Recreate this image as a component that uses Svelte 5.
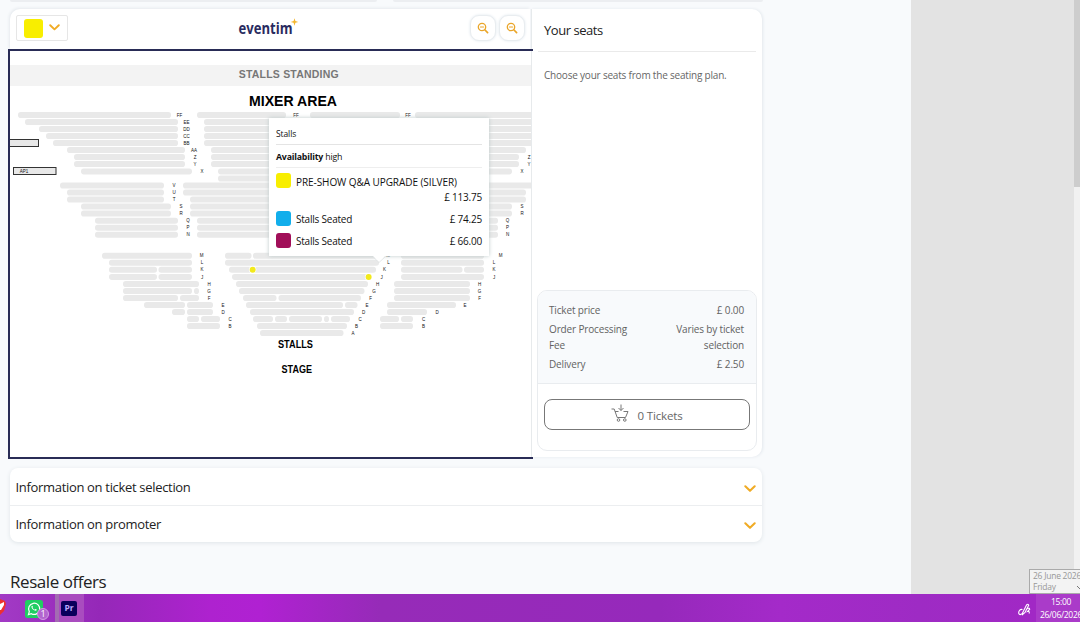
<script>
  const rows = [
    [115, [[18, 171], [197, 286], [310, 400], [415, 540]], [['FF', 179.5], ['FF', 296], ['FF', 408]]],
    [122, [[25, 178], [204, 540]], [['EE', 186.5]]],
    [129, [[39, 178], [204, 540]], [['DD', 186.5]]],
    [136, [[46, 178], [204, 540]], [['CC', 186.5]]],
    [143, [[53, 178], [204, 540]], [['BB', 186.5]]],
    [150, [[67, 185], [211, 526]], [['AA', 194]]],
    [157, [[74, 185], [211, 519]], [['Z', 195], ['Z', 529]]],
    [164, [[74, 185], [211, 519]], [['Y', 195], ['Y', 529]]],
    [171.4, [[81, 192], [218, 512]], [['X', 202], ['X', 522]]],
    [178.5, [[218, 400]], []],
    [185.5, [[60, 164], [183, 540]], [['V', 174]]],
    [192.5, [[67, 164], [183, 526]], [['U', 174]]],
    [199.5, [[67, 164], [190, 526]], [['T', 174]]],
    [206.5, [[81, 171], [190, 512]], [['S', 181], ['S', 522]]],
    [213.5, [[81, 171], [190, 512]], [['R', 181], ['R', 522]]],
    [220.8, [[95, 178], [197, 498]], [['Q', 188], ['Q', 507.5]]],
    [227.8, [[95, 178], [197, 498]], [['P', 188], ['P', 507.5]]],
    [234.8, [[95, 178], [197, 498]], [['N', 188], ['N', 507.5]]],
    [255.8, [[102, 192], [225, 251.5], [253, 383], [401, 484]], [['M', 201.5], ['M', 388], ['M', 500.5]]],
    [262.8, [[109, 192], [225, 379], [401, 484]], [['L', 202], ['L', 388.5], ['L', 494]]],
    [269.8, [[109, 157], [158.5, 192], [229, 376], [401, 462.5], [464, 484]], [['K', 202], ['K', 384.5], ['K', 494]]],
    [276.9, [[109, 157], [158.5, 192], [232, 372], [401, 484]], [['J', 202], ['J', 381.5], ['J', 494]]],
    [284, [[123, 199], [236, 368], [394, 470]], [['H', 209], ['H', 377.5], ['H', 479.5]]],
    [291, [[123, 192], [194, 199], [239, 364.5], [394, 470]], [['G', 209], ['G', 374], ['G', 479.5]]],
    [298, [[123, 178], [180, 199], [243, 276.5], [278.5, 361], [394, 470]], [['F', 209], ['F', 370.5], ['F', 479.5]]],
    [305, [[144, 185], [187, 213], [246, 343], [345, 357.5], [387, 456]], [['E', 223], ['E', 367], ['E', 465]]],
    [312, [[172, 185], [187, 213], [250, 354], [387, 427]], [['D', 223], ['D', 363.5], ['D', 437]]],
    [319, [[187, 199], [201, 220], [253, 273], [275, 287], [289, 322], [324, 329], [331, 350], [380, 399], [401, 413]], [['C', 230], ['C', 360], ['C', 423.5]]],
    [326, [[187, 220], [257, 347], [380, 413]], [['B', 230], ['B', 356.5], ['B', 423.5]]],
    [333, [[260, 343.5]], [['A', 353]]]
  ];
  const categories = [
    { name: 'PRE-SHOW Q&A UPGRADE (SILVER)', price: '£ 113.75', color: '#f8ee00', wide: true },
    { name: 'Stalls Seated', price: '£ 74.25', color: '#12aeeb' },
    { name: 'Stalls Seated', price: '£ 66.00', color: '#a10f59' }
  ];
  const panels = ['Information on ticket selection', 'Information on promoter'];
</script>

{#snippet chevron(w)}
  <svg class="chev" width={w} height={w * 0.64} viewBox="0 0 11 7"><path d="M1.2 1.2 5.5 5.3 9.8 1.2" fill="none" stroke="#f0ab25" stroke-width="1.9" stroke-linecap="round" stroke-linejoin="round" /></svg>
{/snippet}

{#snippet zoomIcon()}
  <svg width="12" height="12" viewBox="0 0 12 12" fill="none" stroke="#eaa62a" stroke-linecap="round"><circle cx="5" cy="5" r="3.7" stroke-width="1.300" /><path d="M3.4 5h3.2" stroke-width="1.200" /><path d="M8 8l2.600 2.600" stroke-width="1.700" /></svg>
{/snippet}

<div class="screen">
  <div class="browser">
    <main>
      <div class="tops"><i></i><i></i></div>
      <section class="booking">
        <div class="plan">
          <header>
            <button class="picker" aria-label="Category"><span></span>{@render chevron(11)}</button>
            <div class="logo">
              <svg width="62" height="26" viewBox="0 0 62 26">
                <text x="0.500" y="19" font-size="16.500" font-weight="700" fill="#292b60" textLength="54" lengthAdjust="spacingAndGlyphs">eventim</text>
                <path d="M56.500 3.200 57.400 6 60.300 6.900 57.400 7.800 56.500 10.700 55.600 7.800 52.700 6.900 55.600 6Z" fill="#f3b72f" />
              </svg>
            </div>
            <div class="zooms">
              <button aria-label="Zoom out">{@render zoomIcon()}</button>
              <button aria-label="Zoom">{@render zoomIcon()}</button>
            </div>
          </header>
          <div class="map">
            <svg width="521" height="406" viewBox="10 51 521 406" font-family="Liberation Sans, Arial, sans-serif" font-weight="bold">
              <rect x="10" y="65" width="522" height="21" fill="#f3f3f3" />
              <text x="238.700" y="78" font-size="10.500" fill="#777" textLength="100">STALLS STANDING</text>
              <text x="249" y="106" font-size="14" textLength="88" lengthAdjust="spacingAndGlyphs">MIXER AREA</text>
              {#each rows as [y, bars, labels]}
                {#each bars as [a, b]}
                  <rect x={a} y={y - 3} width={b - a} height="6" rx="2.800" fill="#e9e9e9" />
                {/each}
                {#each labels as [t, x]}
                  <text {x} y={y + 1.6} font-size="4.500" font-weight="400" text-anchor="middle" fill="#111">{t}</text>
                {/each}
              {/each}
              <circle cx="252.700" cy="269.800" r="3.700" fill="#fff" />
              <circle cx="252.700" cy="269.800" r="3" fill="#f2e91c" />
              <circle cx="368.600" cy="276.900" r="3.700" fill="#fff" />
              <circle cx="368.600" cy="276.900" r="3" fill="#f2e91c" />
              <rect x="5" y="139.500" width="33.500" height="7" fill="#e8e8e8" stroke="#333" />
              <rect x="13.500" y="167.500" width="42.500" height="7" fill="#e8e8e8" stroke="#333" />
              <text x="24" y="173" font-size="4.500" font-weight="400" text-anchor="middle" fill="#111">AP1</text>
              <text x="278" y="348" font-size="10" textLength="35" lengthAdjust="spacingAndGlyphs">STALLS</text>
              <text x="281.500" y="373" font-size="10" textLength="30.500" lengthAdjust="spacingAndGlyphs">STAGE</text>
            </svg>
            <div class="tip">
              <div class="place">Stalls</div>
              <div class="avail"><b>Availability</b> high</div>
              {#each categories as c}
                <div class="cat" class:wide={c.wide}>
                  <span class="sw" style="background:{c.color}"></span>
                  <span class="nm">{c.name}</span>
                  <span class="pr">{c.price}</span>
                </div>
              {/each}
              <svg class="tail" width="12" height="7" viewBox="0 0 12 7"><path d="M0 0h12L6 6Z" fill="#fff" /><path d="M0 1 6 6.500 12 1" fill="none" stroke="#dfe3e4" stroke-width=".8" /></svg>
            </div>
          </div>
        </div>
        <aside>
          <h2>Your seats</h2>
          <p>Choose your seats from the seating plan.</p>
          <div class="summary">
            <div class="costs">
              <div><span>Ticket price</span><span>£ 0.00</span></div>
              <div><span>Order Processing<br />Fee</span><span>Varies by ticket<br />selection</span></div>
              <div><span>Delivery</span><span>£ 2.50</span></div>
            </div>
            <button class="cart">
              <svg width="18" height="18" viewBox="0 0 18 18" fill="none" stroke="#777" stroke-width="1"><path d="M.5 5h2.700l3 8.500h8.300L17 7.500h-4.500M4 7.500h3.500M10 .5v6M7.500 4 10 6.500 12.500 4" /><circle cx="7.500" cy="16" r="1.300" /><circle cx="13.800" cy="16" r="1.300" /></svg>
              <span>0 Tickets</span>
            </button>
          </div>
        </aside>
      </section>
      <section class="info">
        {#each panels as p}
          <div><span>{p}</span>{@render chevron(12)}</div>
        {/each}
      </section>
      <h1>Resale offers</h1>
    </main>
    <div class="margin"></div>
    <div class="scroll"><i></i></div>
  </div>
  <footer>
    <svg class="red" width="7" height="18" viewBox="0 0 7 18"><path d="M0 1 5 3 6 6 4 13 0 17Z" fill="#ed3030" /><path d="M0 6 4 4 4 7 1 12 0 12Z" fill="#fff" /></svg>
    <div class="wa">
      <svg width="18" height="18" viewBox="0 0 18 18"><rect width="18" height="18" rx="2.500" fill="#20ce62" /><path d="M3.400 14.600l.9-3A5.600 5.600 0 1 1 6.400 13.700Z" fill="none" stroke="#fff" stroke-width="1.200" /><path d="M6.600 6.100c.5-.7 1-.3 1.300.7.2.5-.5.700-.3 1 .6 1 1.200 1.500 2.200 1.900.4 0 .6-.8 1-.6 1.400.6 1.100.9.500 1.500-1.100 1-5.700-2-4.700-4.500Z" fill="#fff" /></svg>
      <span>1</span>
    </div>
    <div class="pr-app"><span>Pr</span></div>
    <svg class="pen" width="13" height="13" viewBox="0 0 13 13" fill="none" stroke="#fff" stroke-width="1.100"><path d="M4.500 10 8.500 2Q10.200.4 10.700 2.200L7 9.500 4.500 11.500ZM4.500 6.500C2 6 .5 8 .7 10.200 1 12 3 12 3.800 10.500M8 6.500Q11.500 4 11.700 6.200L9.500 8.500Q12 8 11 10.500" /></svg>
    <div class="clock"><span>15:00</span><span>26/06/2026</span></div>
    <div class="date">26 June 2026<br />Friday<svg width="6" height="5" viewBox="0 0 6 5"><path d="M0 1 3 4 6 1" fill="none" stroke="#777" /></svg></div>
  </footer>
</div>

<style>
  :global(body) { margin: 0; overflow: hidden; }
  .screen { width: 1080px; height: 622px; overflow: hidden; display: flex; flex-direction: column; font-family: "Open Sans", "Noto Sans", sans-serif; color: #222; }
  .screen * { box-sizing: border-box; }
  button { font: inherit; color: inherit; background: #fff; padding: 0; }
  .browser { display: flex; height: 594px; }
  main { width: 911px; background: #f8fafc; padding: 0 0 0 8px; overflow: hidden; }
  .tops { display: flex; gap: 16px; height: 9px; padding-left: 2px; }
  .tops i { width: 367px; height: 2px; background: #eceef1; border-radius: 0 0 6px 6px; }
  .tops i + i { width: 370px; }
  .booking { display: flex; width: 754px; height: 450px; }
  .plan { width: 523px; position: relative; z-index: 1; }
  header { height: 40.500px; margin: 0 1px 0 2px; background: #fff; border-radius: 10px 0 0 0; display: flex; align-items: flex-start; justify-content: space-between; padding: 6px 5px 0 6px; box-shadow: -1px -1px 3px #e6eaee; }
  .picker { width: 52px; height: 26px; border: 1px solid #e6e6e6; border-radius: 2px; display: flex; align-items: center; gap: 6px; padding-left: 6.500px; }
  .picker span { width: 19px; height: 19px; background: #f8ee00; border-radius: 3px; }
  .logo { margin-left: 0; height: 26px; }
  .zooms { display: flex; gap: 3px; }
  .zooms button { width: 26px; height: 26px; border: 1px solid #e9edf0; border-radius: 9px; box-shadow: 0 0 3px #dfe7ee; display: grid; place-items: center; }
  .map { width: 525px; height: 409.500px; border: 2px solid #292c56; border-right: 0; background: linear-gradient(#fff, #fff) 0 0 / 521px 100% no-repeat; position: relative; margin-top: -.5px; }
  .map > svg { display: block; }
  .tip { position: absolute; left: 259px; top: 67px; width: 220px; height: 138px; background: #fff; box-shadow: 0 0 4px #bccaca; padding: 5px 7px 0 7px; font-size: 10px; color: #111; }
  .place { height: 22px; line-height: 22px; font-size: 8.5px; letter-spacing: -.1px; border-bottom: 1px solid #e4e4e4; }
  .avail { height: 23px; line-height: 24px; font-size: 8.8px; letter-spacing: -.2px; border-bottom: 1px solid #eee; margin-bottom: 5px; }
  .cat { display: flex; flex-wrap: wrap; align-content: flex-start; height: 22px; line-height: 16px; letter-spacing: -.22px; }
  .cat.wide { height: 37.500px; }
  .sw { width: 15px; height: 15px; border-radius: 3px; margin-right: 5px; }
  .nm { padding-top: 1px; height: 16px; }
  .cat.wide .nm { width: 180px; letter-spacing: -.07px; white-space: nowrap; }
  .pr { margin-left: auto; padding-top: 1px; }
  .tail { position: absolute; left: 104px; bottom: -7px; }
  .cat .pr, .cat .nm { margin-top: -.5px; }
  aside { width: 231px; height: 448px; background: #fff; border-left: 1px solid #e7eaec; border-radius: 0 10px 10px 0; box-shadow: 1px 0 3px #e3e8ed; padding: 0 6px; display: flex; flex-direction: column; }
  h2 { margin: 0; height: 43px; border-bottom: 1px solid #eaeaea; padding-left: 6px; line-height: 42px; font-size: 13px; font-weight: 400; letter-spacing: -.45px; }
  p { margin: 15px 0 0 6px; font-size: 10px; line-height: 16px; color: #666; letter-spacing: -.2px; white-space: nowrap; }
  .summary { margin: auto -1px 6px -1px; height: 161px; border: 1px solid #e9ecef; border-radius: 10px; overflow: hidden; }
  .costs { height: 93px; background: #f8fafc; border-bottom: 1px solid #e9ecef; padding: 11px 12px 0 11px; font-size: 10px; letter-spacing: -.15px; color: #626262; line-height: 16px; }
  .costs div { display: flex; justify-content: space-between; margin-bottom: 3px; }
  .costs div span + span { text-align: right; }
  .cart { width: 206px; height: 31px; margin: 15px 0 0 6px; border: 1px solid #777; border-radius: 8px; display: flex; align-items: center; justify-content: center; gap: 8px; font-size: 11.5px; color: #666; letter-spacing: -.15px; }
  .cart svg { margin-top: -3px; }
  .cart span { padding-top: 2px; }
  .info { width: 752px; height: 74px; margin: 9px 0 0 2px; background: #fff; border-radius: 8px; box-shadow: 0 1px 4px #dfe4e8; }
  .info div { height: 36.500px; display: flex; align-items: center; justify-content: space-between; padding: 1px 6px 0 5.500px; font-size: 13px; letter-spacing: -.32px; }
  .info div + div { border-top: 1px solid #eceef0; }
  .info .chev { margin-top: 4px; }
  h1 { margin: 28px 0 0 2px; font-size: 17px; line-height: 24px; font-weight: 400; letter-spacing: -.45px; }
  .margin { width: 163px; background: #e3e3e3; }
  .scroll { width: 6px; background: #f1f1f1; }
  .scroll i { display: block; height: 187px; background: #cdcdcd; }
  footer { height: 28px; position: relative; display: flex; align-items: flex-start; color: #fff; background: linear-gradient(90deg, #a23ac5 0, #9528b8 100px, #ae22cf 210px, #b021d2 260px, #962bb8 380px, #9629bb 660px, #a42ac9 780px, #9e2bc4 920px, #a128c5 1035px); }
  .red { margin-top: 4px; }
  .wa { width: 24px; height: 22px; margin: 6px 0 0 18px; position: relative; }
  .wa span { position: absolute; left: 12px; top: 8px; width: 12px; height: 12px; border-radius: 50%; background: #b365cf; border: 1px solid #d19be3; font-size: 9px; line-height: 10px; text-align: center; }
  .pr-app { width: 29px; height: 28px; margin-left: 6px; background: #a94cbf; border-left: 4px solid #a36cb2; padding: 7px 0 0 2px; }
  .pr-app span { display: block; width: 16px; height: 15px; border-radius: 2px; background: #09005b; color: #bcaaff; font-size: 8.5px; line-height: 14px; font-weight: 700; text-align: center; }
  .pen { margin: 9px 0 0 934px; flex: none; }
  .clock { position: absolute; left: 1036px; top: 0; width: 50px; height: 28px; background: #aa3bc9; font-size: 8.5px; line-height: 13px; letter-spacing: -.3px; text-align: center; padding-top: 1px; display: flex; flex-direction: column; }
  .date { position: absolute; left: 1029px; top: -25px; width: 60px; height: 25px; background: #f3f3f3; border: 1px solid #aaa; color: #989898; font-size: 8.5px; line-height: 11px; letter-spacing: -.25px; padding: 0 0 0 3px; white-space: nowrap; }
  .date svg { position: absolute; left: 47px; top: 15px; }
</style>
